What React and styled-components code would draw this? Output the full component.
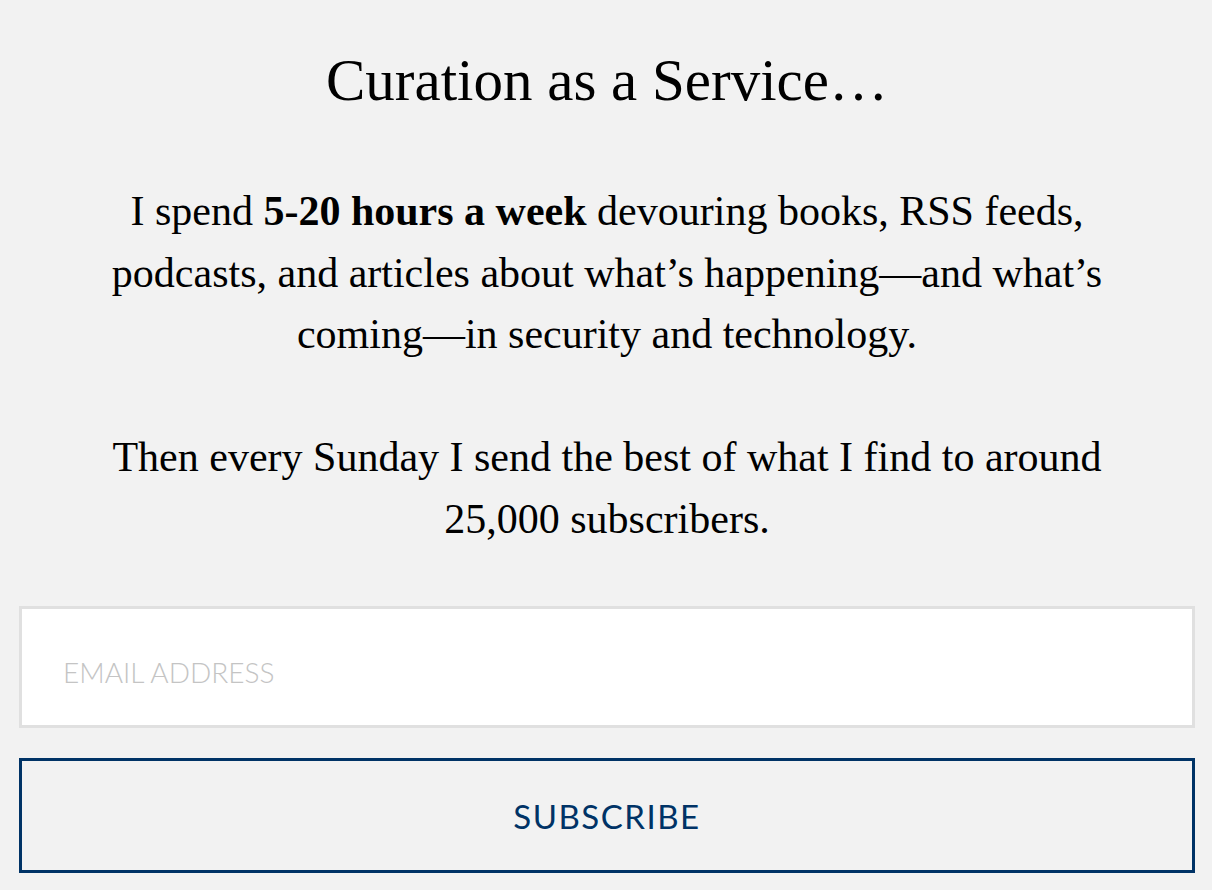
import styled, { createGlobalStyle } from 'styled-components';

const GlobalStyle = createGlobalStyle`
  html, body {
    margin: 0;
    padding: 0;
    background: #f2f2f2;
  }
`;

const App = () => {
  return (
    <>
      <GlobalStyle />
      <Container>
        <Title>Curation as a Service…</Title>
        <Text>
          I spend <strong>5-20 hours a week</strong> devouring books, RSS feeds,
          podcasts, and articles about what’s happening—and what’s
          coming—in security and technology.
        </Text>
        <Text>
          Then every Sunday I send the best of what I find to around
          25,000 subscribers.
        </Text>
        <Form onSubmit={(e) => e.preventDefault()}>
          <EmailInput type="email" placeholder="EMAIL ADDRESS" />
          <SubscribeButton type="submit">Subscribe</SubscribeButton>
        </Form>
      </Container>
    </>
  );
};

export default App;

const Container = styled.div`
  padding: 44px 17px 16px 19px;
  display: flex;
  flex-direction: column;
  align-items: center;
  color: #000;
`;

const Title = styled.h1`
  margin: 0 0 65px;
  font-family: "Liberation Serif", "Times New Roman", serif;
  font-weight: 400;
  font-size: 59px;
  line-height: 72px;
  text-align: center;
`;

const Text = styled.p`
  margin: 0 0 61.5px;
  max-width: 1060px;
  font-family: "Liberation Serif", "Times New Roman", serif;
  font-size: 42px;
  line-height: 61.5px;
  text-align: center;

  strong {
    font-weight: 700;
  }

  &:last-of-type {
    margin-bottom: 56px;
  }
`;

const Form = styled.form`
  width: 100%;
  display: flex;
  flex-direction: column;
  gap: 30px;
`;

const EmailInput = styled.input`
  box-sizing: border-box;
  width: 100%;
  height: 122px;
  padding: 10px 41px 0;
  background: #fff;
  border: 3px solid #e0e0e0;
  border-radius: 0;
  outline: none;
  font-family: Lato, "Noto Sans", sans-serif;
  font-size: 28px;
  font-weight: 300;
  color: #333;

  &::placeholder {
    color: #c4c4c4;
    text-transform: uppercase;
  }
`;

const SubscribeButton = styled.button`
  box-sizing: border-box;
  width: 100%;
  height: 115px;
  background: transparent;
  border: 3px solid #003366;
  border-radius: 0;
  color: #003366;
  font-family: Lato, "Noto Sans", sans-serif;
  font-size: 33px;
  letter-spacing: 1.5px;
  text-transform: uppercase;
  cursor: pointer;
`;
